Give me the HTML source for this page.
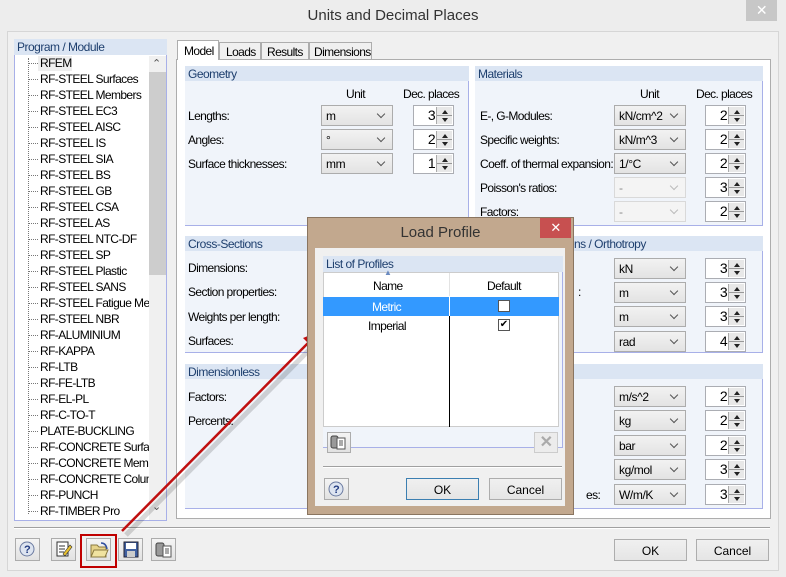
<!DOCTYPE html>
<html><head><meta charset="utf-8"><style>
*{box-sizing:border-box;margin:0;padding:0}
body{width:786px;height:577px;overflow:hidden;background:#ededed;font-family:"Liberation Sans",sans-serif;font-size:12px;color:#000;position:relative;letter-spacing:-0.6px}
.a{position:absolute}
.t{position:absolute;white-space:nowrap;font-size:12px;letter-spacing:-0.6px}
.hdr{position:absolute;height:15px;background:#dbe5f3;color:#1e3f6e;font-size:12px;padding:1px 3px;letter-spacing:-0.5px}
.grp{position:absolute;background:#f0f4fa;border-right:1px solid #a8b0e8;border-bottom:1px solid #a8b0e8}
.sel{position:absolute;width:72px;height:21px;border:1px solid #acacac;background:linear-gradient(#f2f2f2,#e3e3e3);font-size:12px;padding:3px 0 0 4px;letter-spacing:-0.4px}
.sel:after{content:"";position:absolute;right:8px;top:5px;width:5px;height:5px;border-right:1.5px solid #555;border-bottom:1.5px solid #555;transform:rotate(45deg)}
.sel.d{background:#f4f4f4;border-color:#d9d9d9;color:#888}
.sel.d:after{border-color:#bbb}
.sp{position:absolute;width:41px;height:21px;border:1px solid #abadb3;background:#fff;font-size:14px;text-align:right;padding:1px 18px 0 0}
.sp:after{content:"";position:absolute;right:1px;top:1px;width:15px;height:17px;background:linear-gradient(#e8e8e8 0,#e8e8e8 8px,#999 8px,#999 9px,#e8e8e8 9px);border-left:1px solid #aaa}
.sp b{position:absolute;right:5px;z-index:2;width:0;height:0;border-left:3.5px solid transparent;border-right:3.5px solid transparent}
.sp b.u{top:4px;border-bottom:4px solid #222}
.sp b.dn{top:12px;border-top:4px solid #222}
.btn{position:absolute;border:1px solid #adadad;background:linear-gradient(#f0f0f0,#e5e5e5);text-align:center;font-size:12px;letter-spacing:0}
.ib{position:absolute;width:25px;height:23px;border:1px solid #acacac;background:linear-gradient(#f4f4f4,#e2e2e2)}
.li{position:absolute;left:40px;font-size:12px;letter-spacing:-0.6px;white-space:nowrap}
.dot{position:absolute;left:28px;width:10px;border-top:1px dotted #777}
</style></head><body>
<div class="t" style="left:0;width:786px;text-align:center;top:7px;font-size:15px;color:#333;letter-spacing:0">Units and Decimal Places</div>
<div class="a" style="left:746px;top:0;width:31px;height:21px;background:#c7c7c7;color:#fff;text-align:center;font-size:14px;line-height:21px">✕</div>
<div class="a" style="left:7px;top:31px;width:772px;height:540px;border:1px solid #d6d6d6;background:#f0f0f0"></div>

<div class="hdr" style="left:14px;top:39px;width:153px;height:16px">Program / Module</div>
<div class="a" style="left:14px;top:55px;width:153px;height:466px;background:#fff;border:1px solid #a8b0e8;border-top:none"></div>
<div class="a" style="left:28px;top:58px;height:456px;border-left:1px dotted #777"></div>
<div class="a" style="left:149px;top:56px;width:17px;height:464px;background:#f0f0f0"></div>
<div class="a" style="left:149px;top:72px;width:17px;height:203px;background:#cdcdcd"></div>
<div class="t" style="left:152px;top:57px;font-size:11px;color:#555">&#8963;</div>
<div class="t" style="left:152px;top:500px;font-size:11px;color:#555">&#8964;</div>
<div class="a" style="left:38px;top:56px;width:34px;height:15px;background:#eee"></div>
<div class="a" style="left:0;top:0;width:149px;height:577px;overflow:hidden">
<div class="dot" style="top:63px"></div><div class="li" style="top:56px">RFEM</div>
<div class="dot" style="top:79px"></div><div class="li" style="top:72px">RF-STEEL Surfaces</div>
<div class="dot" style="top:95px"></div><div class="li" style="top:88px">RF-STEEL Members</div>
<div class="dot" style="top:111px"></div><div class="li" style="top:104px">RF-STEEL EC3</div>
<div class="dot" style="top:127px"></div><div class="li" style="top:120px">RF-STEEL AISC</div>
<div class="dot" style="top:143px"></div><div class="li" style="top:136px">RF-STEEL IS</div>
<div class="dot" style="top:159px"></div><div class="li" style="top:152px">RF-STEEL SIA</div>
<div class="dot" style="top:175px"></div><div class="li" style="top:168px">RF-STEEL BS</div>
<div class="dot" style="top:191px"></div><div class="li" style="top:184px">RF-STEEL GB</div>
<div class="dot" style="top:207px"></div><div class="li" style="top:200px">RF-STEEL CSA</div>
<div class="dot" style="top:223px"></div><div class="li" style="top:216px">RF-STEEL AS</div>
<div class="dot" style="top:239px"></div><div class="li" style="top:232px">RF-STEEL NTC-DF</div>
<div class="dot" style="top:255px"></div><div class="li" style="top:248px">RF-STEEL SP</div>
<div class="dot" style="top:271px"></div><div class="li" style="top:264px">RF-STEEL Plastic</div>
<div class="dot" style="top:287px"></div><div class="li" style="top:280px">RF-STEEL SANS</div>
<div class="dot" style="top:303px"></div><div class="li" style="top:296px">RF-STEEL Fatigue Members</div>
<div class="dot" style="top:319px"></div><div class="li" style="top:312px">RF-STEEL NBR</div>
<div class="dot" style="top:335px"></div><div class="li" style="top:328px">RF-ALUMINIUM</div>
<div class="dot" style="top:351px"></div><div class="li" style="top:344px">RF-KAPPA</div>
<div class="dot" style="top:367px"></div><div class="li" style="top:360px">RF-LTB</div>
<div class="dot" style="top:383px"></div><div class="li" style="top:376px">RF-FE-LTB</div>
<div class="dot" style="top:399px"></div><div class="li" style="top:392px">RF-EL-PL</div>
<div class="dot" style="top:415px"></div><div class="li" style="top:408px">RF-C-TO-T</div>
<div class="dot" style="top:431px"></div><div class="li" style="top:424px">PLATE-BUCKLING</div>
<div class="dot" style="top:447px"></div><div class="li" style="top:440px">RF-CONCRETE Surfaces</div>
<div class="dot" style="top:463px"></div><div class="li" style="top:456px">RF-CONCRETE Members</div>
<div class="dot" style="top:479px"></div><div class="li" style="top:472px">RF-CONCRETE Columns</div>
<div class="dot" style="top:495px"></div><div class="li" style="top:488px">RF-PUNCH</div>
<div class="dot" style="top:511px"></div><div class="li" style="top:504px">RF-TIMBER Pro</div>
</div>

<div class="a" style="left:176px;top:59px;width:595px;height:460px;background:#fff;border:1px solid #adadad"></div>
<div class="a" style="left:177px;top:40px;width:42px;height:20px;background:#fff;border:1px solid #adadad;border-bottom:none;padding:3px 0 0 6px">Model</div>
<div class="a" style="left:219px;top:42px;width:42px;height:18px;background:#f0f0f0;border:1px solid #adadad;padding:2px 0 0 6px">Loads</div>
<div class="a" style="left:261px;top:42px;width:48px;height:18px;background:#f0f0f0;border:1px solid #adadad;padding:2px 0 0 5px">Results</div>
<div class="a" style="left:309px;top:42px;width:63px;height:18px;background:#f0f0f0;border:1px solid #adadad;padding:2px 0 0 4px">Dimensions</div>

<div class="grp" style="left:185px;top:66px;width:284px;height:160px"></div>
<div class="hdr" style="left:185px;top:66px;width:284px">Geometry</div>
<div class="grp" style="left:475px;top:66px;width:288px;height:160px"></div>
<div class="hdr" style="left:475px;top:66px;width:288px">Materials</div>
<div class="grp" style="left:185px;top:236px;width:284px;height:117px"></div>
<div class="hdr" style="left:185px;top:236px;width:284px">Cross-Sections</div>
<div class="grp" style="left:475px;top:236px;width:288px;height:117px"></div>
<div class="hdr" style="left:475px;top:236px;width:288px">Stiffness Modifications / Orthotropy</div>
<div class="grp" style="left:185px;top:364px;width:284px;height:145px"></div>
<div class="hdr" style="left:185px;top:364px;width:284px">Dimensionless</div>
<div class="grp" style="left:475px;top:364px;width:288px;height:145px"></div>
<div class="hdr" style="left:475px;top:364px;width:288px">Others</div>

<div class="t" style="left:346px;top:87px">Unit</div>
<div class="t" style="left:403px;top:87px">Dec. places</div>
<div class="t" style="left:188px;top:109px">Lengths:</div>
<div class="t" style="left:188px;top:133px">Angles:</div>
<div class="t" style="left:188px;top:157px">Surface thicknesses:</div>
<div class="sel" style="left:321px;top:105px">m</div>
<div class="sel" style="left:321px;top:129px">°</div>
<div class="sel" style="left:321px;top:153px">mm</div>
<div class="sp" style="left:413px;top:105px">3<b class="u"></b><b class="dn"></b></div>
<div class="sp" style="left:413px;top:129px">2<b class="u"></b><b class="dn"></b></div>
<div class="sp" style="left:413px;top:153px">1<b class="u"></b><b class="dn"></b></div>

<div class="t" style="left:640px;top:87px">Unit</div>
<div class="t" style="left:696px;top:87px">Dec. places</div>
<div class="t" style="left:480px;top:109px">E-, G-Modules:</div>
<div class="t" style="left:480px;top:133px">Specific weights:</div>
<div class="t" style="left:480px;top:157px">Coeff. of thermal expansion:</div>
<div class="t" style="left:480px;top:181px">Poisson's ratios:</div>
<div class="t" style="left:480px;top:205px">Factors:</div>
<div class="sel" style="left:614px;top:105px">kN/cm^2</div>
<div class="sel" style="left:614px;top:129px">kN/m^3</div>
<div class="sel" style="left:614px;top:153px">1/°C</div>
<div class="sel d" style="left:614px;top:177px">-</div>
<div class="sel d" style="left:614px;top:201px">-</div>
<div class="sp" style="left:705px;top:105px">2<b class="u"></b><b class="dn"></b></div>
<div class="sp" style="left:705px;top:129px">2<b class="u"></b><b class="dn"></b></div>
<div class="sp" style="left:705px;top:153px">2<b class="u"></b><b class="dn"></b></div>
<div class="sp" style="left:705px;top:177px">3<b class="u"></b><b class="dn"></b></div>
<div class="sp" style="left:705px;top:201px">2<b class="u"></b><b class="dn"></b></div>

<div class="t" style="left:188px;top:261px">Dimensions:</div>
<div class="t" style="left:188px;top:285px">Section properties:</div>
<div class="t" style="left:188px;top:310px">Weights per length:</div>
<div class="t" style="left:188px;top:334px">Surfaces:</div>
<div class="t" style="left:578px;top:285px">:</div>
<div class="sel" style="left:614px;top:258px">kN</div>
<div class="sel" style="left:614px;top:282px">m</div>
<div class="sel" style="left:614px;top:306px">m</div>
<div class="sel" style="left:614px;top:331px">rad</div>
<div class="sp" style="left:705px;top:258px">3<b class="u"></b><b class="dn"></b></div>
<div class="sp" style="left:705px;top:282px">3<b class="u"></b><b class="dn"></b></div>
<div class="sp" style="left:705px;top:306px">3<b class="u"></b><b class="dn"></b></div>
<div class="sp" style="left:705px;top:331px">4<b class="u"></b><b class="dn"></b></div>

<div class="t" style="left:188px;top:390px">Factors:</div>
<div class="t" style="left:188px;top:414px">Percents:</div>
<div class="t" style="left:586px;top:488px">es:</div>
<div class="sel" style="left:614px;top:386px">m/s^2</div>
<div class="sel" style="left:614px;top:410px">kg</div>
<div class="sel" style="left:614px;top:435px">bar</div>
<div class="sel" style="left:614px;top:459px">kg/mol</div>
<div class="sel" style="left:614px;top:484px">W/m/K</div>
<div class="sp" style="left:705px;top:386px">2<b class="u"></b><b class="dn"></b></div>
<div class="sp" style="left:705px;top:410px">2<b class="u"></b><b class="dn"></b></div>
<div class="sp" style="left:705px;top:435px">2<b class="u"></b><b class="dn"></b></div>
<div class="sp" style="left:705px;top:459px">3<b class="u"></b><b class="dn"></b></div>
<div class="sp" style="left:705px;top:484px">3<b class="u"></b><b class="dn"></b></div>

<div class="a" style="left:14px;top:527px;width:756px;border-top:1px solid #a0a0a0;border-bottom:1px solid #fff"></div>
<div class="ib" style="left:15px;top:538px"><svg width="23" height="21"><circle cx="11" cy="10" r="7" fill="#dde4f0" stroke="#6a7aa0"/><text x="8" y="14" font-size="11" font-weight="bold" fill="#203a80" font-family="Liberation Sans">?</text></svg></div>
<div class="ib" style="left:51px;top:538px"><svg width="23" height="21"><rect x="5" y="3" width="11" height="14" fill="#fff" stroke="#333"/><path d="M7 7h6M7 10h6M7 13h5" stroke="#333"/><path d="M11 15l7-9 2 2-7 9z" fill="#e8c030" stroke="#333" stroke-width=".6"/></svg></div>
<div class="ib" style="left:86px;top:538px"><svg width="23" height="21"><path d="M4 6h6l2 2h7v10H4z" fill="#e6d38a" stroke="#8a7a40"/><path d="M4 18l3-7h14l-3 7z" fill="#f0e3a0" stroke="#8a7a40"/><path d="M14 4q5 0 6 6" stroke="#3050a0" fill="none" stroke-width="1.5"/></svg></div>
<div class="ib" style="left:118px;top:538px"><svg width="23" height="21"><rect x="5" y="3" width="14" height="15" fill="#4060a0" stroke="#223"/><rect x="7" y="4" width="10" height="6" fill="#fff"/><rect x="8" y="12" width="8" height="6" fill="#ccc"/></svg></div>
<div class="ib" style="left:151px;top:538px"><svg width="23" height="21"><rect x="4" y="4" width="8" height="13" rx="2" fill="#999" stroke="#444"/><rect x="11" y="7" width="8" height="11" fill="#fff" stroke="#555"/><path d="M13 10h4M13 12h4M13 14h4" stroke="#555"/></svg></div>
<div class="a" style="left:80px;top:534px;width:37px;height:34px;border:2px solid #c00000"></div>
<div class="btn" style="left:614px;top:539px;width:73px;height:22px;padding-top:4px">OK</div>
<div class="btn" style="left:696px;top:539px;width:73px;height:22px;padding-top:4px">Cancel</div>

<svg class="a" style="left:0;top:0" width="786" height="577">
<line x1="126" y1="535" x2="314" y2="345" stroke="rgba(0,0,0,0.15)" stroke-width="5"/>
<line x1="122" y1="531" x2="310" y2="341" stroke="#c01010" stroke-width="2.5"/>
<polygon points="320,331 303,338 313,348" fill="#c01010"/>
</svg>

<div class="a" style="left:307px;top:217px;width:267px;height:298px;background:#c2a88e;border:1px solid #8a7560"></div>
<div class="t" style="left:307px;width:267px;text-align:center;top:224px;font-size:15px;color:#333;letter-spacing:0">Load Profile</div>
<div class="a" style="left:540px;top:218px;width:31px;height:20px;background:#c75050;color:#fff;text-align:center;font-size:13px;line-height:20px">✕</div>
<div class="a" style="left:315px;top:248px;width:250px;height:258px;background:#f0f0f0"></div>
<div class="hdr" style="left:323px;top:256px;width:240px;height:16px">List of Profiles</div>
<div class="a" style="left:323px;top:272px;width:240px;height:176px;background:#f0f4fa;border-right:1px solid #a8b0e8;border-bottom:1px solid #a8b0e8"></div>
<div class="a" style="left:323px;top:272px;width:236px;height:155px;background:#fff;border:1px solid #ccc"></div>
<div class="a" style="left:449px;top:273px;height:23px;border-left:1px solid #e3e3e3"></div>
<div class="a" style="left:449px;top:316px;height:111px;border-left:1px solid #000"></div>
<div class="t" style="left:373px;top:279px">Name</div>
<div class="t" style="left:384px;top:268px;font-size:8px;color:#6a8ac0">▲</div>
<div class="t" style="left:487px;top:279px">Default</div>
<div class="a" style="left:323px;top:297px;width:236px;height:19px;background:#3399ff"></div>
<div class="a" style="left:449px;top:297px;height:19px;border-left:1px solid #fff"></div>
<div class="t" style="left:372px;top:300px;color:#fff">Metric</div>
<div class="a" style="left:498px;top:300px;width:12px;height:12px;background:#fff;border:1px solid #555"></div>
<div class="t" style="left:368px;top:319px">Imperial</div>
<div class="a" style="left:498px;top:319px;width:12px;height:12px;background:#fff;border:1px solid #555;font-size:10px;line-height:10px;text-align:center;letter-spacing:0">✔</div>
<div class="ib" style="left:327px;top:432px;width:24px;height:21px"><svg width="22" height="19"><rect x="3" y="3" width="7" height="12" rx="2" fill="#999" stroke="#444"/><rect x="9" y="5" width="8" height="11" fill="#fff" stroke="#555"/><path d="M11 8h4M11 10h4M11 12h4" stroke="#555"/></svg></div>
<div class="ib" style="left:534px;top:432px;width:24px;height:21px;background:#ececec;border-color:#ccc;color:#aaa;text-align:center;font-size:16px;line-height:19px;font-weight:bold">✕</div>
<div class="a" style="left:323px;top:466px;width:239px;border-top:1px solid #a0a0a0;border-bottom:1px solid #fff"></div>
<div class="ib" style="left:324px;top:478px;width:25px;height:22px"><svg width="23" height="20"><circle cx="11" cy="10" r="7" fill="#dde4f0" stroke="#6a7aa0"/><text x="8" y="14" font-size="11" font-weight="bold" fill="#203a80" font-family="Liberation Sans">?</text></svg></div>
<div class="btn" style="left:406px;top:478px;width:73px;height:22px;padding-top:4px;border-color:#3c7fb1">OK</div>
<div class="btn" style="left:489px;top:478px;width:73px;height:22px;padding-top:4px">Cancel</div>
</body></html>
